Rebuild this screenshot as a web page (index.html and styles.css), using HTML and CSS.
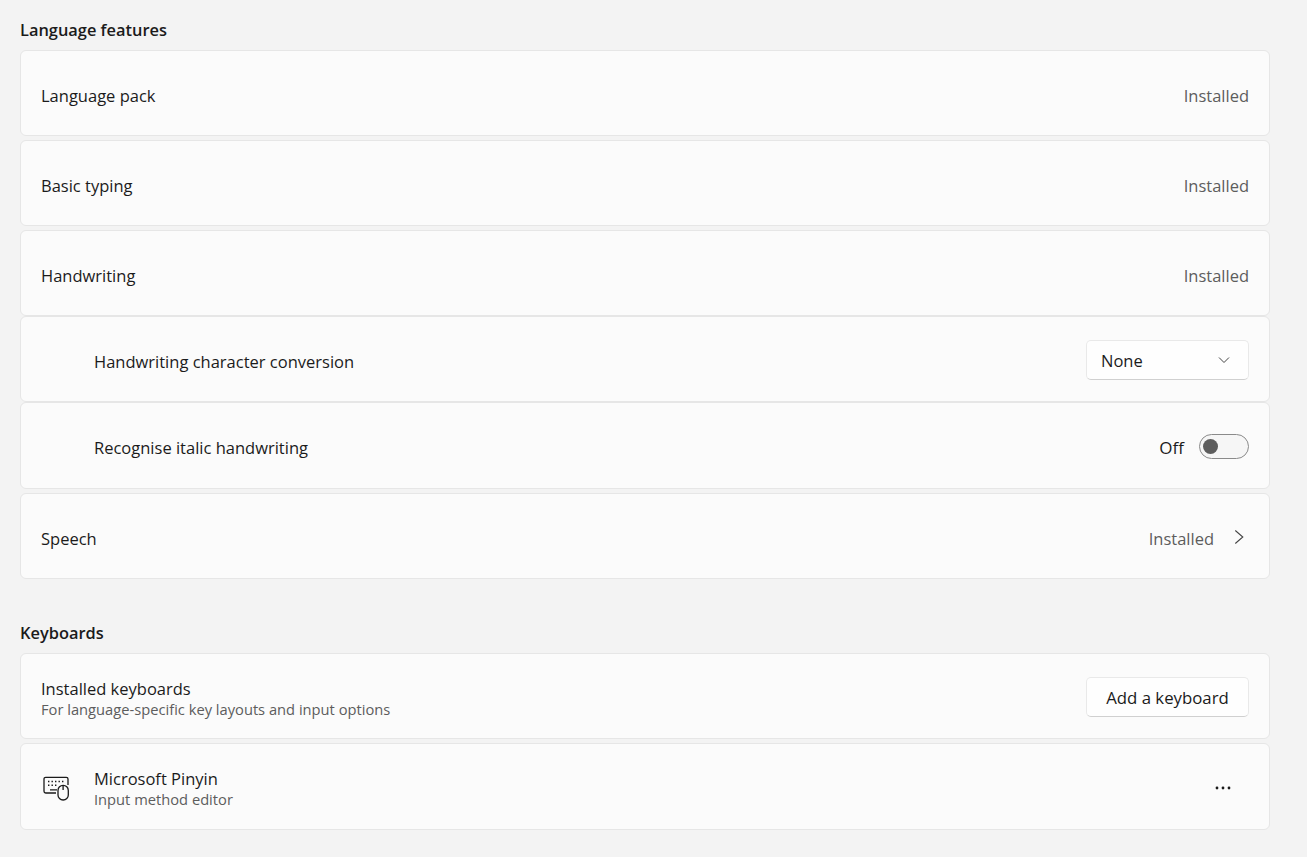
FILE: index.html
```html
<!DOCTYPE html>
<html lang="en">
<head>
<meta charset="utf-8">
<title>Language options</title>
<link rel="stylesheet" href="styles.css">
</head>
<body>
<main class="page">
  <h2 class="heading heading-first">Language features</h2>
  <div class="group">
    <div class="card"><span class="label">Language pack</span><span class="status">Installed</span></div>
    <div class="card"><span class="label">Basic typing</span><span class="status">Installed</span></div>
    <div class="stack">
      <div class="card"><span class="label">Handwriting</span><span class="status">Installed</span></div>
      <div class="card sub"><span class="label">Handwriting character conversion</span>
        <div class="select"><span>None</span>
          <svg class="select-chevron" width="12" height="12" viewBox="0 0 12 12"><path d="M1 3.500l5 5 5-5" fill="none" stroke="#444" stroke-width="1"/></svg>
        </div>
      </div>
      <div class="card sub tall"><span class="label label-tall">Recognise italic handwriting</span>
        <div class="toggle-wrap"><span class="off">Off</span><span class="toggle"><span class="knob"></span></span></div>
      </div>
    </div>
    <div class="card"><span class="label label-tall">Speech</span>
      <div class="status-link"><span class="status status-tall">Installed</span>
        <svg class="chevron" width="10" height="16" viewBox="0 0 10 16"><path d="M1.300 1.500l7.500 6.500-7.500 6.500" fill="none" stroke="#444" stroke-width="1.100"/></svg>
      </div>
    </div>
  </div>
  <h2 class="heading heading-next">Keyboards</h2>
  <div class="group">
    <div class="card">
      <div class="text-col"><span class="name">Installed keyboards</span><span class="desc">For language-specific key layouts and input options</span></div>
      <button class="button">Add a keyboard</button>
    </div>
    <div class="card tall">
      <div class="with-icon">
        <svg class="kbd-icon" width="26" height="26" viewBox="0 0 26 26" fill="none" stroke="#1b1b1b" stroke-width="1.300">
          <path d="M13 18H2.700A1.700 1.700 0 0 1 1 16.300V4A1.700 1.700 0 0 1 2.700 2.300h20.600A1.700 1.700 0 0 1 25 4v6"/>
          <rect x="15" y="10.300" width="10.300" height="14.700" rx="5.100"/>
          <path d="M20.100 10.500v4.500M7 14.800h7"/>
          <path d="M5 6.500h1.400M8.500 6.500h1.400M12 6.500h1.400M15.500 6.500h1.400M19 6.500h1.400M5 10.300h1.400M8.500 10.300h1.400M12 10.300h1.400" stroke-width="1.500"/>
        </svg>
        <div class="text-col"><span class="name">Microsoft Pinyin</span><span class="desc">Input method editor</span></div>
      </div>
      <svg class="more" width="16" height="4" viewBox="0 0 16 4" fill="#1b1b1b"><circle cx="2" cy="2" r="1.400"/><circle cx="8" cy="2" r="1.400"/><circle cx="14" cy="2" r="1.400"/></svg>
    </div>
  </div>
</main>
</body>
</html>
```
FILE: styles.css
```css
* { box-sizing: border-box; }
html, body { margin: 0; padding: 0; height: 100%; overflow: hidden; }
body {
  background: #f3f3f3;
  color: #1b1b1b;
  font-family: "Open Sans", "Noto Sans", sans-serif;
  font-size: 16.5px;
}
.page { width: 1270px; padding-left: 20px; }
.heading { margin: 0; font-size: 16.4px; font-weight: 600; line-height: 20px; }
.heading-first { padding-top: 20px; padding-bottom: 10px; }
.heading-next { padding-top: 44px; padding-bottom: 10px; }
.group { display: flex; flex-direction: column; gap: 4px; }
.stack { display: flex; flex-direction: column; }
.card {
  height: 86px;
  background: #fbfbfb;
  border: 1px solid #e6e6e6;
  border-radius: 6px;
  padding: 0 20px;
  display: flex;
  align-items: center;
  justify-content: space-between;
}
.sub { padding-left: 73px; }
.tall { height: 87px; }
.label { font-size: 16.5px; line-height: 20px; padding-top: 6px; }
.label-tall { padding-top: 5px; }
.status { font-size: 16.5px; line-height: 20px; color: #5d5d5d; padding-top: 6px; }
.status-tall { padding-top: 5px; }
.status-link { display: flex; align-items: center; gap: 20px; margin-right: 5px; }
.chevron { margin-top: 2px; }
.select {
  width: 163px; height: 40px;
  margin-top: 2px;
  background: #fefefe;
  border: 1px solid #e9e9e9;
  border-bottom-color: #d0d0d0;
  border-radius: 5px;
  padding: 0 18px 0 14px;
  display: flex; align-items: center; justify-content: space-between;
  font-size: 16.5px;
}
.toggle-wrap { display: flex; align-items: center; gap: 15px; padding-top: 2px; }
.off { font-size: 17px; line-height: 20px; padding-top: 2px; }
.toggle {
  width: 50px; height: 25px;
  border: 1px solid #8a8a8a;
  border-radius: 13px;
  background: #f6f6f6;
  display: flex; align-items: center;
  padding-left: 3px;
}
.knob { width: 15px; height: 15px; border-radius: 50%; background: #5d5d5d; }
.text-col { display: flex; flex-direction: column; padding-top: 5px; }
.name { font-size: 16.5px; line-height: 20px; }
.desc { font-size: 14.7px; line-height: 20px; color: #5d5d5d; }
.button {
  width: 163px; height: 40px;
  margin-top: 2px;
  background: #fefefe;
  border: 1px solid #e9e9e9;
  border-bottom-color: #d0d0d0;
  border-radius: 5px;
  font: inherit; font-size: 16.8px; color: inherit;
  padding: 0;
}
.with-icon { display: flex; align-items: center; gap: 25px; }
.kbd-icon { flex: none; margin: 3px 0 0 2px; }
.more { margin-right: 18px; margin-top: 2px; }
```
